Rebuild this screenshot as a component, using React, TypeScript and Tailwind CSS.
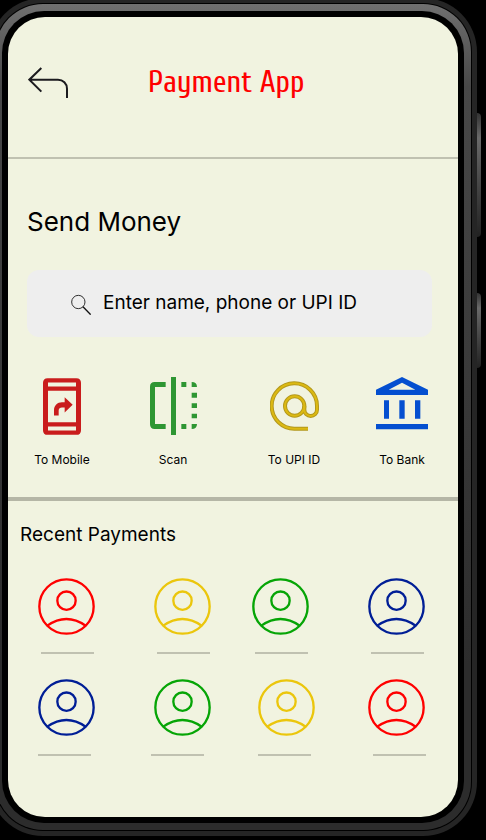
import React from "react";

const RED = "#ff0000";
const YELLOW = "#ebc60c";
const GREEN = "#06a506";
const NAVY = "#001e96";

function BackIcon() {
  return (
    <svg className="h-[31px] w-10" viewBox="0 0 120 93" fill="none" stroke="#1c1b1f" strokeWidth="6" aria-hidden="true">
      <path d="M40 3 4 38l36 36M4 38h86a27 27 0 0 1 27 27v28" />
    </svg>
  );
}

function SearchIcon() {
  return (
    <svg className="h-[22px] w-5 shrink-0" viewBox="0 0 60 60" preserveAspectRatio="xMidYMax meet" fill="none" stroke="#111" aria-hidden="true">
      <circle cx="22" cy="21" r="20" strokeWidth="2.6" />
      <path d="m36 35 23 24" strokeWidth="4" />
    </svg>
  );
}

function MobileIcon() {
  return (
    <svg className="h-[57px] w-[38px]" viewBox="0 0 114 170" fill="#c91c1c" aria-hidden="true">
      <path
        fillRule="evenodd"
        d="M14 0h86q14 0 14 14v142q0 14-14 14H14q-14 0-14-14V14Q0 0 14 0zM15 13v12h84V13zM15 38v94h84V38zM15 145v12h84v-12z"
      />
      <path d="M33 112V96c0-14 10-24 24-24h8V57l24 23-24 23V88h-8c-6 0-10 4-10 9v15z" />
    </svg>
  );
}

function ScanIcon() {
  return (
    <svg className="h-[58px] w-[47px]" viewBox="0 0 141 174" fill="#2e9633" aria-hidden="true">
      <path d="M47 15H14Q0 15 0 29v113q0 14 14 14h33v-15H15V30h32zM63 0h15v174H63z" />
      <path d="M94 15h15v15H94zM125 15q16 0 16 15h-16zM125 47h16v15h-16zM125 79h16v14h-16zM125 110h16v14h-16zM94 141h15v15H94zM125 141h16q0 15-16 15z" />
    </svg>
  );
}

function AtIcon() {
  const shape = "M114 143H74a68 68 0 1 1 67-69v12a19 19 0 0 1-38 0V74";
  return (
    <svg className="h-[50px] w-[49px]" viewBox="0 0 147 150" fill="none" aria-hidden="true">
      <g stroke="#b3981c" strokeWidth="12">
        <path d={shape} />
        <circle cx="74" cy="75" r="29" />
      </g>
      <g stroke="#dcb912" strokeWidth="6">
        <path d={shape} />
        <circle cx="74" cy="75" r="29" />
      </g>
    </svg>
  );
}

function BankIcon() {
  return (
    <svg className="h-[58px] w-[52px]" viewBox="0 0 156 174" fill="#044fd0" aria-hidden="true">
      <path fillRule="evenodd" d="m78 0 78 38v16H0V38zm0 17L38 38h80z" />
      <path d="M24 70h15v55H24zM70 70h16v55H70zM117 70h16v55h-16zM0 141h156v16H0z" />
    </svg>
  );
}

function Avatar({ color }: { color: string }) {
  return (
    <svg className="h-[57px] w-[57px]" viewBox="0 0 171 171" fill="none" stroke={color} strokeWidth="7" aria-hidden="true">
      <circle cx="85.5" cy="85.5" r="81.5" />
      <circle cx="85.5" cy="68" r="27.5" />
      <path d="M28 143q57-40 115 0" />
    </svg>
  );
}

function Action({ label, children }: { label: string; children: React.ReactNode }) {
  return (
    <button type="button" className="flex min-w-0 flex-col items-center">
      <span className="flex h-[58px] items-center">{children}</span>
      <span className="mt-[17px] text-xs whitespace-nowrap">{label}</span>
    </button>
  );
}

function Contacts({ colors, className }: { colors: string[]; className: string }) {
  return (
    <div className={`grid pl-[30px] ${className}`}>
      {colors.map((color, i) => (
        <button key={i} type="button" aria-label={`Contact ${i + 1}`} className="w-[57px]">
          <Avatar color={color} />
        </button>
      ))}
    </div>
  );
}

function NameLines({ className }: { className: string }) {
  return (
    <div className={`grid ${className}`}>
      {[0, 1, 2, 3].map((i) => (
        <span key={i} className="h-[2px] w-[53px] bg-[#c0c1b1]" />
      ))}
    </div>
  );
}

export default function App() {
  return (
    <div className="flex min-h-screen overflow-hidden bg-black font-['Inter',sans-serif] text-black">
      <div className="-mt-[2px] mb-1 -ml-[11px] flex min-w-0 flex-1 rounded-[54px] bg-[#252525] p-[5px]">
        <div className="flex min-w-0 flex-1 rounded-[49px] bg-black p-px">
          <div className="flex min-w-0 flex-1 rounded-[48px] bg-linear-to-b from-[#707070] via-[#484848] via-10% to-[#2c2c2c] to-80% p-[7px]">
            <div className="flex min-w-0 flex-1 rounded-[42px] bg-black p-[6px]">
              <main className="flex min-w-0 flex-1 flex-col overflow-hidden rounded-[37px] bg-[#f1f3e0]">
                <header className="flex items-center gap-20 border-b-2 border-[#c0c1b1] pt-[45px] pb-[55px] pl-5">
                  <button type="button" aria-label="Back">
                    <BackIcon />
                  </button>
                  <h1 className="font-['Cuprum','Liberation_Sans_Narrow',sans-serif] text-[31px] leading-10 whitespace-nowrap text-[#ff0000]">
                    Payment App
                  </h1>
                </header>

                <section className="border-b-4 border-[#b5b6a6] pt-[45px] pb-[29px]">
                  <h2 className="pl-[19px] text-[26px] leading-9">Send Money</h2>
                  <label className="mt-[30px] mr-[26px] ml-[19px] flex h-[67px] items-center gap-3 rounded-xl bg-[#eeeeee] px-11">
                    <SearchIcon />
                    <input
                      type="text"
                      aria-label="Enter name, phone or UPI ID"
                      placeholder="Enter name, phone or UPI ID"
                      className="min-w-0 flex-1 bg-transparent text-[19px] outline-none placeholder:text-black"
                    />
                  </label>
                  <div className="mt-10 grid grid-cols-[108fr_114fr_128fr_88fr] pr-3">
                    <Action label="To Mobile">
                      <MobileIcon />
                    </Action>
                    <Action label="Scan">
                      <ScanIcon />
                    </Action>
                    <Action label="To UPI ID">
                      <AtIcon />
                    </Action>
                    <Action label="To Bank">
                      <BankIcon />
                    </Action>
                  </div>
                </section>

                <section className="pt-5 pb-10">
                  <h2 className="pl-3 text-[19px] leading-7">Recent Payments</h2>
                  <Contacts colors={[RED, YELLOW, GREEN, NAVY]} className="mt-[29px] grid-cols-[116fr_98fr_116fr_90fr]" />
                  <NameLines className="mt-[17px] grid-cols-[116fr_98fr_116fr_87fr] pl-[33px]" />
                  <Contacts colors={[NAVY, GREEN, YELLOW, RED]} className="mt-[25px] grid-cols-[116fr_104fr_110fr_90fr]" />
                  <NameLines className="mt-[18px] grid-cols-[113fr_107fr_115fr_85fr] pl-[30px]" />
                </section>
              </main>
            </div>
          </div>
        </div>
      </div>
      <div className="flex w-[9px] shrink-0 flex-col gap-14 pt-[113px]">
        <span className="h-[124px] w-1 rounded-r-sm bg-linear-to-b from-[#333] via-[#6a6a6a] via-20% to-[#222]" />
        <span className="h-[75px] w-1 rounded-r-sm bg-linear-to-b from-[#333] via-[#6a6a6a] via-20% to-[#222]" />
      </div>
    </div>
  );
}
